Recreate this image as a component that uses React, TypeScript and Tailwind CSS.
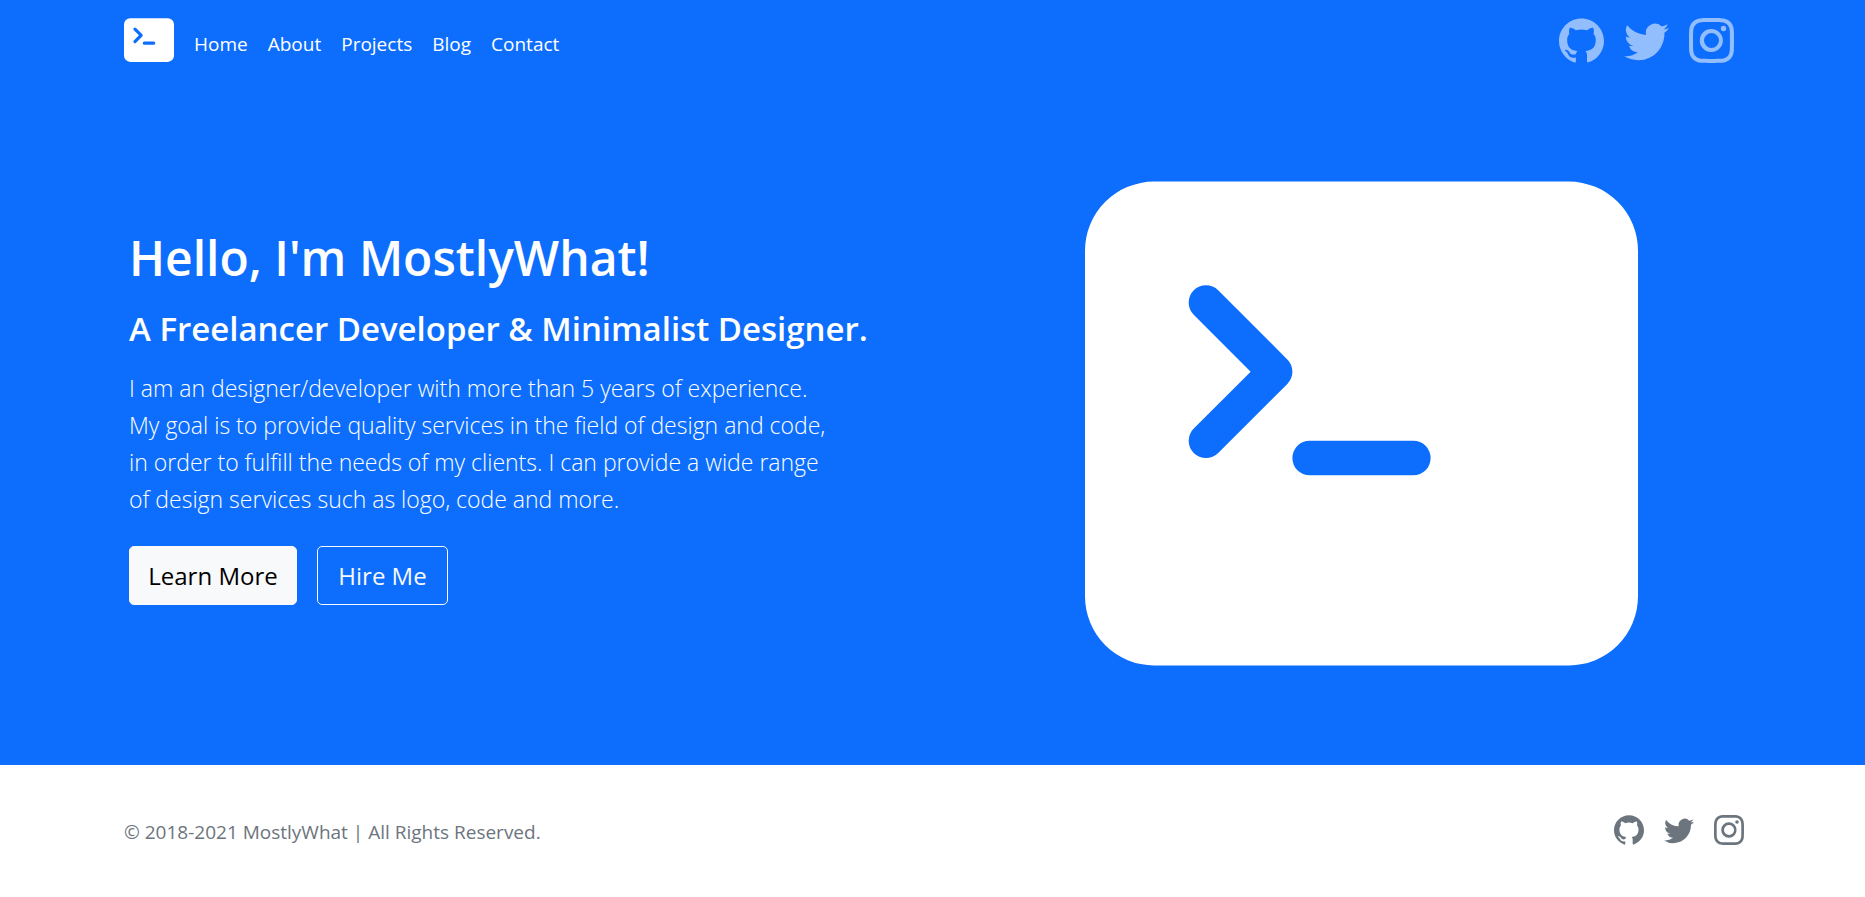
import { BsInstagram, BsTwitter } from "react-icons/bs";
import { SiGithub } from "react-icons/si";

const navItems = ["Home", "About", "Projects", "Blog", "Contact"];

const socials = [
  { label: "GitHub", Icon: SiGithub },
  { label: "Twitter", Icon: BsTwitter },
  { label: "Instagram", Icon: BsInstagram },
];

function TerminalIcon({ className }: { className: string }) {
  return (
    <svg viewBox="0 0 16 16" fill="currentColor" aria-hidden="true" className={className}>
      <path d="M0 3a2 2 0 0 1 2-2h12a2 2 0 0 1 2 2v10a2 2 0 0 1-2 2H2a2 2 0 0 1-2-2V3zm9.5 5.5h-3a.5.5 0 0 0 0 1h3a.5.5 0 0 0 0-1zm-6.354-.354a.5.5 0 1 0 .708.708l2-2a.5.5 0 0 0 0-.708l-2-2a.5.5 0 1 0-.708.708L4.793 6.5 3.146 8.146z" />
    </svg>
  );
}

function SocialLinks({ className, iconClassName }: { className: string; iconClassName: string }) {
  return (
    <div className={className}>
      {socials.map(({ label, Icon }) => (
        <a key={label} href="#" aria-label={label}>
          <Icon className={iconClassName} />
        </a>
      ))}
    </div>
  );
}

export default function App() {
  return (
    <div className="min-h-screen bg-white font-['Open_Sans',sans-serif]">
      <div className="bg-[#0d6efd] pb-[65px] text-white">
        <header className="flex items-center justify-between pt-[15px] pr-[121px] pl-[124px]">
          <div className="flex items-center gap-5">
            <a href="#" aria-label="MostlyWhat">
              <TerminalIcon className="size-[50px]" />
            </a>
            <nav className="flex gap-5 pt-2 text-[19px] leading-[30px]">
              {navItems.map((item) => (
                <a key={item} href="#">
                  {item}
                </a>
              ))}
            </nav>
          </div>
          <SocialLinks className="flex gap-5 pr-[10px] text-white/55" iconClassName="size-[45px]" />
        </header>

        <main className="grid grid-cols-[53fr_47fr] items-center pt-[82px] pr-[123px] pl-[124px]">
          <section className="pb-[14px] pl-[5px]">
            <h1 className="text-[48px] leading-[60px] font-semibold">Hello, I'm MostlyWhat!</h1>
            <h2 className="mt-5 text-[33px] leading-[42px] font-semibold">
              A Freelancer Developer &amp; Minimalist Designer.
            </h2>
            <p className="mt-5 text-[23px] leading-[37px] font-light">
              I am an designer/developer with more than 5 years of experience.
              <br />
              My goal is to provide quality services in the field of design and code,
              <br />
              in order to fulfill the needs of my clients. I can provide a wide range
              <br />
              of design services such as logo, code and more.
            </p>
            <div className="mt-7 flex gap-5">
              <button className="h-[59px] w-[168px] rounded-[5px] border border-[#f8f9fa] bg-[#f8f9fa] text-[24px] text-black">
                Learn More
              </button>
              <button className="h-[59px] w-[131px] rounded-[5px] border border-[#f8f9fa] text-[24px] text-[#f8f9fa]">
                Hire Me
              </button>
            </div>
          </section>
          <div className="flex justify-center">
            <TerminalIcon className="size-[553px]" />
          </div>
        </main>
      </div>

      <footer className="flex items-center justify-between pt-12 pr-[121px] pl-[124px] text-[#6c757d]">
        <p className="pt-1 text-[19px] leading-[30px]">© 2018-2021 MostlyWhat | All Rights Reserved.</p>
        <SocialLinks className="flex gap-5" iconClassName="size-[30px]" />
      </footer>
    </div>
  );
}
